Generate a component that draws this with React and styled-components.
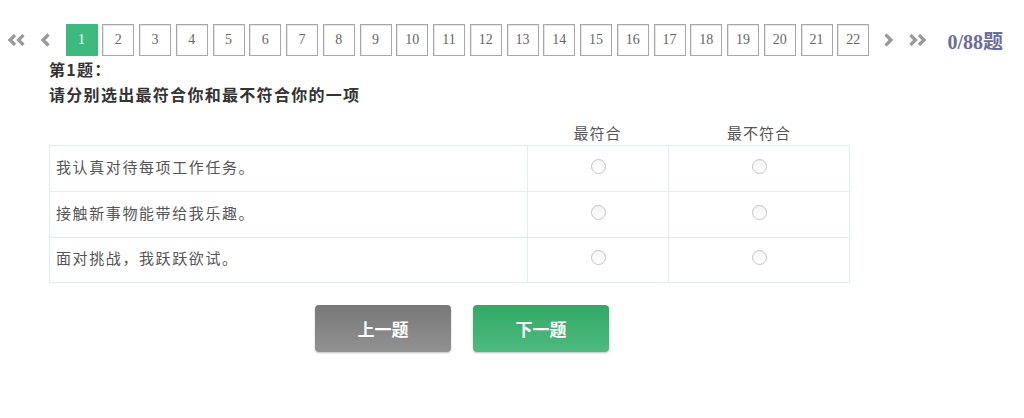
import React from "react";
import styled, { createGlobalStyle } from "styled-components";

const Global = createGlobalStyle`
  html, body { margin: 0; padding: 0; background: #fff; }
  body { font-family: "Noto Sans CJK SC", "Noto Sans", sans-serif; color: #333; }
`;

const Page = styled.div`
  width: 1024px;
  height: 418px;
  overflow: hidden;
  background: #fff;
`;

const Pager = styled.div`
  display: flex;
  align-items: center;
  gap: 4.76px;
  margin-top: 24px;
  padding-left: 6px;
  height: 32px;
`;

const Arrow = styled.span`
  display: flex;
  align-items: center;
  justify-content: center;
  width: ${(p) => p.$w}px;
  height: 32px;
`;

const PageBox = styled.span`
  box-sizing: border-box;
  width: 32px;
  height: 32px;
  display: flex;
  align-items: center;
  justify-content: center;
  font-family: "Liberation Serif", serif;
  font-size: 14px;
  color: ${(p) => (p.$active ? "#fff" : "#666")};
  background: ${(p) => (p.$active ? "#3dba7e" : "#fff")};
  border: 1px solid ${(p) => (p.$active ? "#3dba7e" : "#a8a8a8")};
  box-shadow: ${(p) => (p.$active ? "none" : "inset 1px 1px 0 #e6e6e6")};
`;

const Count = styled.span`
  margin-left: 14px;
  font-family: "Liberation Serif", "Noto Sans CJK SC", serif;
  font-weight: bold;
  font-size: 20px;
  color: #6a6c9e;
`;

const Title = styled.div`
  margin-top: 1px;
  padding-left: 49px;
  font-size: 16px;
  font-weight: bold;
  letter-spacing: 1.3px;
  line-height: 25px;
  color: #333;
`;

const Table = styled.div`
  margin-left: 49px;
  width: 801px;
  display: grid;
  grid-template-columns: 478px 141px 182px;
`;

const HeadCell = styled.div`
  margin-top: 12px;
  height: 26px;
  display: flex;
  align-items: center;
  justify-content: center;
  font-size: 15px;
  letter-spacing: 1px;
  color: #555;
`;

const Cell = styled.div`
  box-sizing: border-box;
  height: 46px;
  display: flex;
  align-items: center;
  justify-content: ${(p) => (p.$text ? "flex-start" : "center")};
  padding-left: ${(p) => (p.$text ? "6px" : "0")};
  padding-bottom: 5px;
  font-size: 15px;
  letter-spacing: 1.6px;
  color: #555;
  border-top: 1px solid #dcefec;
  border-left: 1px solid #dcefec;
  border-right: ${(p) => (p.$last ? "1px solid #dcefec" : "0")};
  border-bottom: ${(p) => (p.$bottom ? "1px solid #dcefec" : "0")};
`;

const Radio = styled.span`
  box-sizing: border-box;
  width: 15px;
  height: 15px;
  border-radius: 50%;
  border: 1px solid #c4c4c4;
  background: linear-gradient(#f4f4f4, #fff);
`;

const Buttons = styled.div`
  display: flex;
  gap: 22px;
  margin-top: 22px;
  padding-left: 315px;
`;

const Btn = styled.button`
  width: 136px;
  height: 47px;
  border: 0;
  border-radius: 4px;
  font-family: "Noto Sans CJK SC", sans-serif;
  font-size: 17px;
  font-weight: bold;
  color: #fff;
  background: ${(p) =>
    p.$green
      ? "linear-gradient(#35a866, #4cbb7d)"
      : "linear-gradient(#787878, #929292)"};
  box-shadow: 0 1px 2px rgba(0, 0, 0, 0.25);
`;

const Double = ({ dir }) => (
  <svg width="19" height="12" viewBox="0 0 19 12">
    <g fill="none" stroke="#999" strokeWidth="3.2">
      {dir === "l" ? (
        <>
          <polyline points="8,1 3,6 8,11" />
          <polyline points="16.5,1 11.5,6 16.5,11" />
        </>
      ) : (
        <>
          <polyline points="2.5,1 7.5,6 2.5,11" />
          <polyline points="11,1 16,6 11,11" />
        </>
      )}
    </g>
  </svg>
);

const Single = ({ dir }) => (
  <svg width="11" height="14" viewBox="0 0 11 14">
    <polyline
      points={dir === "l" ? "8.5,1.5 3,7 8.5,12.5" : "2.5,1.5 8,7 2.5,12.5"}
      fill="none"
      stroke="#999"
      strokeWidth="3.2"
    />
  </svg>
);

const rows = ["我认真对待每项工作任务。", "接触新事物能带给我乐趣。", "面对挑战，我跃跃欲试。"];

export default function App() {
  return (
    <Page>
      <Global />
      <Pager>
        <Arrow $w={20}>
          <Double dir="l" />
        </Arrow>
        <Arrow $w={30}>
          <Single dir="l" />
        </Arrow>
        {Array.from({ length: 22 }, (_, i) => (
          <PageBox key={i} $active={i === 0}>
            {i + 1}
          </PageBox>
        ))}
        <Arrow $w={28}>
          <Single dir="r" />
        </Arrow>
        <Arrow $w={22}>
          <Double dir="r" />
        </Arrow>
        <Count>0/88题</Count>
      </Pager>
      <Title>
        <div>第1题：</div>
        <div>请分别选出最符合你和最不符合你的一项</div>
      </Title>
      <Table>
        <HeadCell />
        <HeadCell>最符合</HeadCell>
        <HeadCell>最不符合</HeadCell>
        {rows.map((r, i) => (
          <React.Fragment key={i}>
            <Cell $text $bottom={i === rows.length - 1}>
              {r}
            </Cell>
            <Cell $bottom={i === rows.length - 1}>
              <Radio />
            </Cell>
            <Cell $last $bottom={i === rows.length - 1}>
              <Radio />
            </Cell>
          </React.Fragment>
        ))}
      </Table>
      <Buttons>
        <Btn>上一题</Btn>
        <Btn $green>下一题</Btn>
      </Buttons>
    </Page>
  );
}
